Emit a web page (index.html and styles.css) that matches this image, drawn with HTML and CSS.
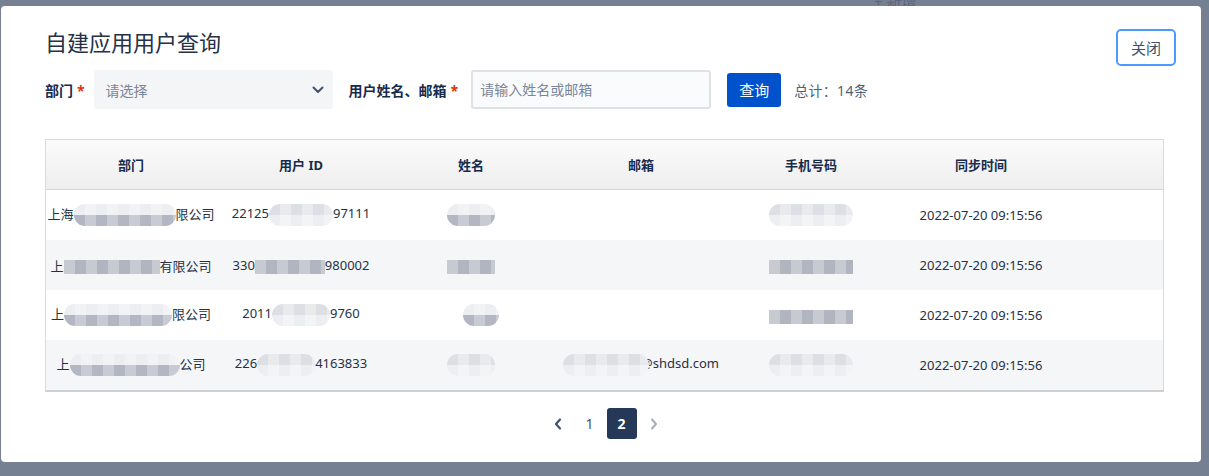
FILE: index.html
```html
<!DOCTYPE html>
<html>

<head>
	<meta charset="utf-8">
	<meta name="viewport" content="width=device-width">
	<title>自建应用用户查询</title>
	<link rel="stylesheet" href="styles.css">
</head>

<body>
	<div class="behind">+ 新增</div>

	<div class="modal">
		<div class="modal-head">
			<h2>自建应用用户查询</h2>
			<button class="close">关闭</button>
		</div>

		<form class="search">
			<label class="lbl">部门<span class="req">*</span></label>
			<div class="select">
				<span>请选择</span>
				<svg width="12" height="8" viewBox="0 0 12 8"><polyline points="1.5,1.5 6,6 10.5,1.5" fill="none" stroke="#42526e" stroke-width="2" stroke-linecap="round" stroke-linejoin="round"/></svg>
			</div>
			<label class="lbl lbl2">用户姓名、邮箱<span class="req">*</span></label>
			<input class="txt" type="text" placeholder="请输入姓名或邮箱">
			<button class="query" type="button">查询</button>
			<span class="total">总计：14条</span>
		</form>

		<div class="tableWrap">
			<table>
				<colgroup>
					<col class="c"><col class="c"><col class="c"><col class="c"><col class="c"><col class="c"><col>
				</colgroup>
				<thead>
					<tr>
						<th>部门</th>
						<th>用户 ID</th>
						<th>姓名</th>
						<th>邮箱</th>
						<th>手机号码</th>
						<th>同步时间</th>
						<th></th>
					</tr>
				</thead>
				<tbody>
					<tr>
						<td>上海<i class="mask m102 round"></i>限公司</td>
						<td>22125<i class="mask m64 round light"></i>97111</td>
						<td><i class="mask m48 round"></i></td>
						<td></td>
						<td><i class="mask m84 round light"></i></td>
						<td>2022-07-20 09:15:56</td>
						<td></td>
					</tr>
					<tr>
						<td>上<i class="mask m96 flat dark"></i>有限公司</td>
						<td>330<i class="mask m70 flat"></i>980002</td>
						<td><i class="mask m48 flat"></i></td>
						<td></td>
						<td><i class="mask m84 flat"></i></td>
						<td>2022-07-20 09:15:56</td>
						<td></td>
					</tr>
					<tr>
						<td>上<i class="mask m108 round"></i>限公司</td>
						<td>2011<i class="mask m58 round light"></i>9760</td>
						<td class="pad"><i class="mask m36 round"></i></td>
						<td></td>
						<td><i class="mask m84 flat light"></i></td>
						<td>2022-07-20 09:15:56</td>
						<td></td>
					</tr>
					<tr>
						<td>上<i class="mask m110 round"></i>公司</td>
						<td>226<i class="mask m58 round light"></i>4163833</td>
						<td><i class="mask m48 round light"></i></td>
						<td><i class="mask m86 round light over"></i>@shdsd.com</td>
						<td><i class="mask m84 round light"></i></td>
						<td>2022-07-20 09:15:56</td>
						<td></td>
					</tr>
				</tbody>
			</table>
		</div>

		<div class="pager">
			<span class="pg arrow"><svg width="8" height="12" viewBox="0 0 8 12"><polyline points="6,1.5 2,6 6,10.5" fill="none" stroke="#42526e" stroke-width="2.2" stroke-linecap="round" stroke-linejoin="round"/></svg></span>
			<span class="pg">1</span>
			<span class="pg on">2</span>
			<span class="pg arrow"><svg width="8" height="12" viewBox="0 0 8 12"><polyline points="2,1.5 6,6 2,10.5" fill="none" stroke="#a5adba" stroke-width="2" stroke-linecap="round" stroke-linejoin="round"/></svg></span>
		</div>
	</div>
</body>

</html>
```

FILE: styles.css
```css
html, body {
	margin: 0;
	padding: 0;
	height: 100%;
}

body {
	background: #768093;
	font-family: "Noto Sans", "Noto Sans CJK SC", sans-serif;
	color: #172b4d;
	position: relative;
	overflow: hidden;
}

.behind {
	position: absolute;
	top: -8px;
	left: 874px;
	font-size: 15px;
	line-height: 18px;
	color: #5c6579;
}

.modal {
	position: relative;
	margin: 6px 0 0 1px;
	width: 1200px;
	height: 456px;
	box-sizing: border-box;
	background: #fff;
	border-radius: 4px;
	padding: 22px 25px 0 44px;
}

.modal-head {
	display: flex;
	justify-content: space-between;
	align-items: flex-start;
}

.modal-head h2 {
	margin: 0;
	font-size: 22px;
	line-height: 28px;
	font-weight: normal;
	color: #253246;
}

.close {
	margin-top: 1px;
	width: 60px;
	height: 37px;
	border: 2px solid #4c9aff;
	border-radius: 5px;
	background: #fff;
	color: #42526e;
	font-family: inherit;
	font-size: 15px;
	padding: 0;
}

.search {
	display: flex;
	align-items: center;
	margin-top: 4px;
	height: 39px;
}

.lbl {
	font-size: 14px;
	font-weight: bold;
	color: #172b4d;
	margin-right: 9px;
}

.lbl2 {
	margin-left: 16px;
	margin-right: 13px;
}

.req {
	color: #de350b;
	margin-left: 4px;
}

.select {
	width: 239px;
	height: 39px;
	box-sizing: border-box;
	background: #f4f5f7;
	border-radius: 3px;
	display: flex;
	align-items: center;
	justify-content: space-between;
	padding: 0 9px 0 12px;
	font-size: 14px;
	color: #7a869a;
}

.txt {
	width: 240px;
	height: 39px;
	box-sizing: border-box;
	background: #fafbfc;
	border: 2px solid #dfe1e6;
	border-radius: 3px;
	padding: 0 7px;
	font-family: inherit;
	font-size: 14px;
	outline: none;
}

.txt::placeholder {
	color: #7a869a;
}

.query {
	margin-left: 16px;
	width: 54px;
	height: 34px;
	border: none;
	border-radius: 3px;
	background: #0052cc;
	color: #fff;
	font-family: inherit;
	font-size: 15px;
	padding: 0;
}

.total {
	margin-left: 13px;
	font-size: 14px;
	letter-spacing: 0.3px;
	color: #505f79;
}

.tableWrap {
	margin-top: 30px;
	width: 1119px;
	border: 1px solid #dadada;
	border-bottom: 2px solid #d0d0d0;
	box-sizing: border-box;
}

table {
	width: 100%;
	border-collapse: collapse;
	table-layout: fixed;
}

col.c {
	width: 170px;
}

th {
	height: 49px;
	padding: 0;
	font-size: 13px;
	font-weight: bold;
	color: #172b4d;
	background: linear-gradient(180deg, #fbfbfb, #eeeeee);
	border-bottom: 1px solid #d6d6d6;
}

td {
	height: 50px;
	padding: 0;
	text-align: center;
	vertical-align: middle;
	font-size: 13px;
	color: #253246;
	white-space: nowrap;
}

tbody tr:nth-child(even) td {
	background: #f5f6f8;
}

td.pad {
	padding-left: 20px;
}

.mask {
	display: inline-block;
	height: 22px;
	vertical-align: middle;
	background:
		repeating-linear-gradient(90deg, rgba(255,255,255,0) 0 11px, rgba(255,255,255,0.28) 11px 22px),
		linear-gradient(180deg, #eceef1 50%, #b3b7c3 50%);
}

.mask.light {
	background:
		repeating-linear-gradient(90deg, rgba(255,255,255,0) 0 11px, rgba(255,255,255,0.35) 11px 22px),
		linear-gradient(180deg, #dcdfe3 50%, #eceef1 50%);
}

.mask.dark {
	background:
		repeating-linear-gradient(90deg, rgba(255,255,255,0) 0 11px, rgba(255,255,255,0.25) 11px 22px),
		linear-gradient(180deg, #a7abb7 50%, #f1f2f4 50%);
}

.mask.flat {
	height: 14px;
	background: repeating-linear-gradient(90deg, #c7cad1 0 11px, #b0b5c0 11px 22px);
}

.mask.round {
	border-radius: 11px;
}

.mask.over {
	position: relative;
	margin-right: -8px;
}

.m36 { width: 36px; }
.m48 { width: 48px; }
.m58 { width: 58px; }
.m64 { width: 64px; }
.m70 { width: 70px; }
.m84 { width: 84px; }
.m86 { width: 86px; }
.m96 { width: 96px; }
.m102 { width: 102px; }
.m108 { width: 108px; }
.m110 { width: 110px; }

.pager {
	width: 1119px;
	display: flex;
	justify-content: center;
	gap: 2px;
	margin-top: 16px;
	padding-left: 2px;
	box-sizing: border-box;
}

.pg {
	width: 30px;
	height: 31px;
	display: flex;
	align-items: center;
	justify-content: center;
	font-size: 14px;
	color: #42526e;
	border-radius: 3px;
}

.pg.on {
	background: #253858;
	color: #fff;
	font-weight: bold;
}
```
